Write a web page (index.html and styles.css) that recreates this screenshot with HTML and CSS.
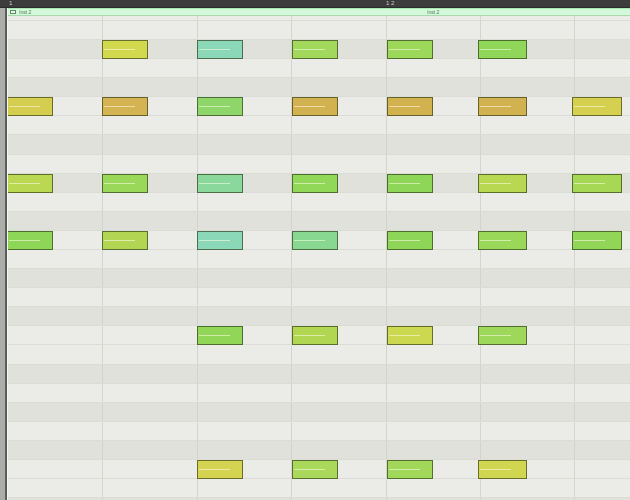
FILE: index.html
```html
<!DOCTYPE html>
<html>
	<head>
		<meta charset="UTF-8">
		<title>Piano Roll - Inst 2</title>
		<link rel="stylesheet" href="styles.css">
	</head>
	<body>
		<div class="ruler">
			<span class="bar">1</span>
			<span class="bar">1 2</span>
		</div>
		<div class="editor">
			<div class="gutter"></div>
			<div class="roll">
				<div class="region">
					<span class="region-name first"><span class="region-icon"></span>Inst 2</span>
					<span class="region-name">Inst 2</span>
				</div>
				<div id="lanes"></div>
			</div>
		</div>
		<script>
			"use strict";
			const lanes_el = document.getElementById('lanes');
			// F E D# D C# C B A# A G# G F#
			const black_keys = [0, 0, 1, 0, 1, 0, 0, 1, 0, 1, 0, 1];
			// row: [left, width, colour]
			const notes = {
				1: [[94, 46, "#d3d94f"], [189, 46, "#8ad8b8"], [284, 46, "#a2d85c"], [379, 46, "#9cd85a"], [470, 49, "#8fd659"]],
				4: [[-1, 46, "#d4cd4f"], [94, 46, "#d3b352"], [189, 46, "#8ed66a"], [284, 46, "#d2b150"], [379, 46, "#d1b24e"], [470, 49, "#d1b150"], [564, 50, "#d6d050"]],
				8: [[-1, 46, "#bad852"], [94, 46, "#9ad85a"], [189, 46, "#8ad89c"], [284, 46, "#92d858"], [379, 46, "#8ed658"], [470, 49, "#b8d852"], [564, 50, "#a6d856"]],
				11: [[-1, 46, "#8ed658"], [94, 46, "#b2d654"], [189, 46, "#8ad8b8"], [284, 46, "#88d892"], [379, 46, "#8ed658"], [470, 49, "#9ad85a"], [564, 50, "#92d658"]],
				16: [[189, 46, "#92d658"], [284, 46, "#b0d652"], [379, 46, "#ccd84f"], [470, 49, "#9ed85a"]],
				23: [[189, 46, "#d4d452"], [284, 46, "#aad85a"], [379, 46, "#a2d85a"], [470, 49, "#d0d650"]]
			};

			function make_note(n) {
				return '<div class="note" style="left:' + n[0] + 'px;width:' + n[1]
					+ 'px;background-color:' + n[2] + '"></div>';
			}
			function draw_lanes() {
				let html = '<div class="lane lane-top"></div>';
				for (let row = 0; row < 26; row++) {
					const cls = black_keys[(row + 1) % 12] ? "lane black" : "lane";
					const row_notes = notes[row] || [];
					html += '<div class="' + cls + '">' + row_notes.map(make_note).join("") + '</div>';
				}
				lanes_el.innerHTML = html;
			}
			draw_lanes();
		</script>
	</body>
</html>
```

FILE: styles.css
```css
html, body {
	margin: 0;
	height: 100%;
	overflow: hidden;
	background: #ebebe7;
	font-family: "Liberation Sans", Arial, sans-serif;
}
.ruler {
	height: 8px;
	box-sizing: border-box;
	display: flex;
	padding-left: 9px;
	background: #3c3c3c;
	border-bottom: 1px solid #2b2b2b;
}
.bar {
	flex: none;
	width: 377px;
	font-size: 6px;
	line-height: 7px;
	color: #cdcdcd;
}
.bar:last-child {
	flex: 1;
	width: auto;
}
.editor {
	display: flex;
	height: 492px;
}
.gutter {
	width: 5px;
	flex: none;
	background: #acacaa;
	border-right: 2px solid #5c5c5c;
}
.roll {
	flex: 1;
	min-width: 0;
	border-left: 1px solid #eafbe4;
	overflow: hidden;
}
.region {
	height: 8px;
	box-sizing: border-box;
	display: flex;
	align-items: center;
	background: #d3f8da;
	border-top: 1px solid #a3eaac;
	border-bottom: 1px solid #a9d9ae;
	font-size: 5px;
	color: #4e7c55;
}
.region-name {
	display: flex;
	align-items: center;
	gap: 3px;
}
.region-name.first {
	width: 419px;
	padding-left: 2px;
	box-sizing: border-box;
}
.region-icon {
	width: 6px;
	height: 4px;
	box-sizing: border-box;
	border: 1px solid #5f8c66;
	background: #e6fbe9;
}
.lane {
	--grid: #d5d5cf;
	position: relative;
	height: 19.1px;
	box-sizing: border-box;
	border-bottom: 1px solid #dcdcd7;
	background-color: #ebebe7;
	background-image: linear-gradient(to right,
		transparent 94px, var(--grid) 94px 95px,
		transparent 95px 189px, var(--grid) 189px 190px,
		transparent 190px 283px, var(--grid) 283px 284px,
		transparent 284px 378px, var(--grid) 378px 379px,
		transparent 379px 472px, var(--grid) 472px 473px,
		transparent 473px 566px, var(--grid) 566px 567px,
		transparent 567px);
}
.lane.black {
	--grid: #d3d3cd;
	background-color: #e1e1dc;
}
.lane-top {
	height: 4.9px;
}
.note {
	position: absolute;
	top: 0;
	height: 19.1px;
	box-sizing: border-box;
	border: 1px solid rgba(45, 55, 25, 0.65);
}
.note::after {
	content: "";
	position: absolute;
	left: 1px;
	top: 8px;
	width: 31px;
	height: 1px;
	background: rgba(255, 255, 235, 0.55);
}
```
